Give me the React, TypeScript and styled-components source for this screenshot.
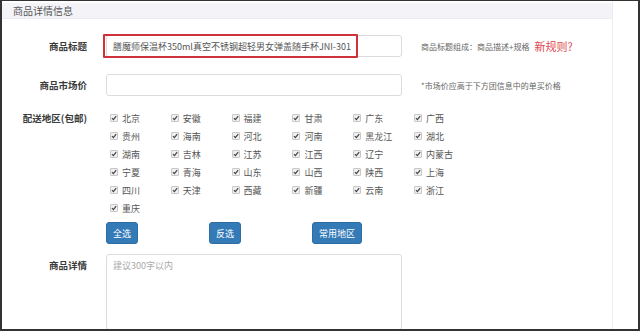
import { createGlobalStyle, styled } from "styled-components";

const GlobalStyle = createGlobalStyle`
  html, body {
    margin: 0;
    padding: 0;
    background: #fff;
  }
  body {
    font-family: "Noto Sans CJK SC", "Noto Sans", sans-serif;
    color: #333;
  }
`;

const Frame = styled.div`
  box-sizing: border-box;
  width: 640px;
  height: 331px;
  border: 2px solid #333;
  border-top-width: 1px;
  background: #fff;
  overflow: hidden;
  display: flex;
`;

const Panel = styled.div`
  width: 610px;
  flex: none;
  border-right: 1px solid #ececf2;
  display: flex;
  flex-direction: column;
`;

const PanelHead = styled.div`
  height: 21px;
  margin-top: 2px;
  padding-left: 11px;
  display: flex;
  align-items: center;
  background: #f4f4f8;
  border-bottom: 1px solid #ebebf0;
  font-size: 10px;
  color: #555;
`;

const Form = styled.div`
  padding-top: 16px;
  display: flex;
  flex-direction: column;
`;

const Row = styled.div<{ $gap?: number; $top?: boolean }>`
  display: flex;
  align-items: ${(p) => (p.$top ? "flex-start" : "center")};
  margin-top: ${(p) => p.$gap ?? 0}px;
`;

const Label = styled.div<{ $lh?: number }>`
  width: 85px;
  flex: none;
  text-align: right;
  font-size: 9.5px;
  font-weight: bold;
  color: #3a3a3a;
  line-height: ${(p) => p.$lh ?? 14}px;
`;

const Field = styled.div`
  margin-left: 19px;
  display: flex;
  align-items: center;
`;

const InputWrap = styled.div`
  position: relative;
`;

const TextInput = styled.div`
  box-sizing: border-box;
  width: 296px;
  height: 22px;
  border: 1px solid #dcdcdc;
  border-radius: 3px;
  padding-left: 6px;
  display: flex;
  align-items: center;
  font-size: 9px;
  color: #555;
  white-space: nowrap;
  overflow: hidden;
`;

const Highlight = styled.span`
  position: absolute;
  left: -3px;
  top: -1px;
  width: 251px;
  height: 20px;
  border: 2px solid #d0323c;
  border-radius: 1px;
  pointer-events: none;
`;

const Hint = styled.span`
  margin-left: 19px;
  font-size: 8px;
  color: #666;
  display: flex;
  align-items: center;
`;

const RuleLink = styled.span`
  margin-left: 5px;
  font-size: 11px;
  color: #e0454e;
`;

const RegionGrid = styled.div`
  margin-left: 23px;
  display: grid;
  grid-template-columns: repeat(6, 60.8px);
  grid-auto-rows: 18px;
`;

const Region = styled.label`
  display: flex;
  align-items: center;
  font-size: 9px;
  color: #555;
  white-space: nowrap;
`;

const Check = styled.span`
  box-sizing: border-box;
  width: 8px;
  height: 8px;
  margin-right: 4px;
  border: 1px solid #c8c8c8;
  border-radius: 1px;
  background: #f0f0f0;
  display: flex;
  align-items: center;
  justify-content: center;
`;

const ButtonBar = styled.div`
  margin-left: 104px;
  margin-top: 5px;
  display: flex;
  gap: 71px;
`;

const Button = styled.button`
  height: 22px;
  padding: 0 6px;
  border: 1px solid #2e6da4;
  border-radius: 3px;
  background: #337ab7;
  color: #fff;
  font-family: inherit;
  font-size: 9px;
  line-height: 1;
`;

const TextArea = styled.div`
  box-sizing: border-box;
  width: 296px;
  height: 76px;
  border: 1px solid #dcdcdc;
  border-radius: 3px;
  padding: 4px 6px;
  font-size: 9px;
  color: #aaa;
`;

const regions = [
  "北京", "安徽", "福建", "甘肃", "广东", "广西",
  "贵州", "海南", "河北", "河南", "黑龙江", "湖北",
  "湖南", "吉林", "江苏", "江西", "辽宁", "内蒙古",
  "宁夏", "青海", "山东", "山西", "陕西", "上海",
  "四川", "天津", "西藏", "新疆", "云南", "浙江",
  "重庆",
];

function CheckMark() {
  return (
    <svg width="6" height="6" viewBox="0 0 10 10">
      <path d="M1.5 5.2 L4 7.6 L8.6 2" fill="none" stroke="#444" strokeWidth="2" />
    </svg>
  );
}

function App() {
  return (
    <>
      <GlobalStyle />
      <Frame>
        <Panel>
          <PanelHead>商品详情信息</PanelHead>
          <Form>
            <Row>
              <Label>商品标题</Label>
              <Field>
                <InputWrap>
                  <TextInput>膳魔师保温杯350ml真空不锈钢超轻男女弹盖随手杯JNI-301</TextInput>
                  <Highlight />
                </InputWrap>
                <Hint>
                  商品标题组成：商品描述+规格
                  <RuleLink>新规则?</RuleLink>
                </Hint>
              </Field>
            </Row>
            <Row $gap={17}>
              <Label>商品市场价</Label>
              <Field>
                <TextInput />
                <Hint>*市场价应高于下方团信息中的单买价格</Hint>
              </Field>
            </Row>
            <Row $gap={13} $top>
              <Label $lh={18}>配送地区(包邮)</Label>
              <RegionGrid>
                {regions.map((name) => (
                  <Region key={name}>
                    <Check>
                      <CheckMark />
                    </Check>
                    {name}
                  </Region>
                ))}
              </RegionGrid>
            </Row>
            <ButtonBar>
              <Button>全选</Button>
              <Button>反选</Button>
              <Button>常用地区</Button>
            </ButtonBar>
            <Row $gap={10} $top>
              <Label $lh={22}>商品详情</Label>
              <Field>
                <TextArea>建议300字以内</TextArea>
              </Field>
            </Row>
          </Form>
        </Panel>
      </Frame>
    </>
  );
}

export default App;
